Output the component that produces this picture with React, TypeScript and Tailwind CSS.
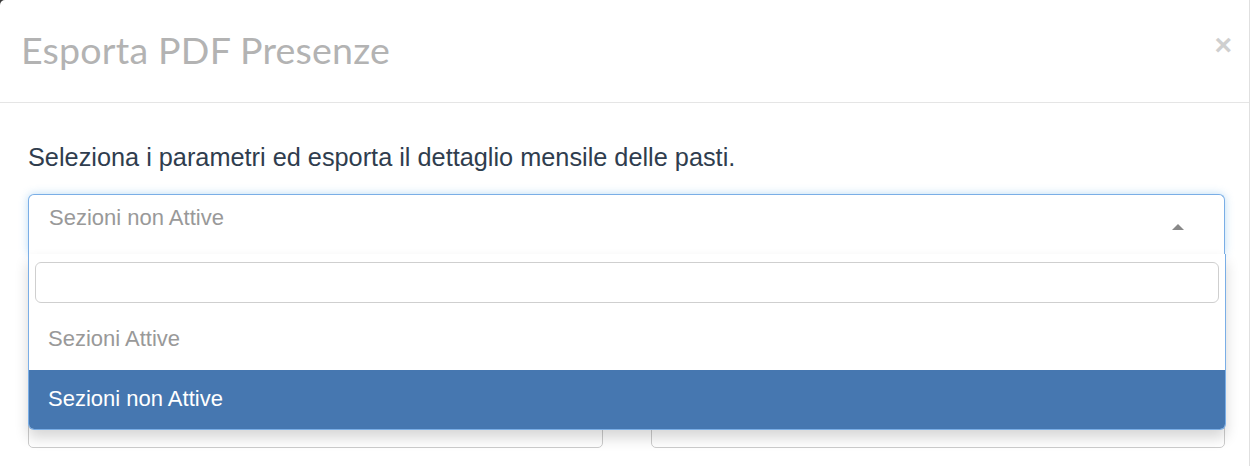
import React from "react";

const sans = "font-['Liberation_Sans',Arial,sans-serif]";

export default function App() {
  return (
    <div className="min-h-[466px] w-[1250px] bg-[#3a3a3a] overflow-hidden">
      <div className="bg-white rounded-tl-[5px] min-h-[466px] w-[1250px] border-r border-[#e0e0e0]">
        {/* header */}
        <div className="h-[103px] border-b border-[#e5e5e5] flex items-start justify-between pl-[21px] pr-[17px]">
          <h4 className="font-['Lato',sans-serif] text-[37.6px] leading-none text-[#b3b3b3] mt-[31px] tracking-[0.2px]">
            Esporta PDF Presenze
          </h4>
          <button className={`${sans} font-bold text-[30px] leading-none text-[#cfcfcf] mt-[30px]`}>×</button>
        </div>

        {/* body */}
        <div className={`${sans} px-[28px] pt-[40px]`}>
          <p className="text-[25.3px] leading-[28px] text-[#2f3d4e]">
            Seleziona i parametri ed esporta il dettaglio mensile delle pasti.
          </p>

          <div className="relative mt-[23px] w-[1197px]">
            {/* select */}
            <div className="h-[60px] border border-[#7aaee6] border-b-0 rounded-t-[6px] shadow-[0_0_8px_rgba(102,175,233,0.45)] flex items-center justify-between pl-[20px] pr-[40px] bg-white">
              <span className="text-[22px] text-[#999] -mt-[14px]">Sezioni non Attive</span>
              <span className="w-0 h-0 border-l-[6px] border-r-[6px] border-b-[6px] border-l-transparent border-r-transparent border-b-[#888] mt-[4px]" />
            </div>

            {/* behind fields */}
            <div className="pt-[58px]">
              <div className="h-[42px] border border-[#ccc] rounded-[4px]" />
              <div className="grid grid-cols-2 gap-[48px] mt-[48px]">
                <div className="h-[46px] border border-[#ccc] rounded-[5px]" />
                <div className="h-[46px] border border-[#ccc] rounded-[5px]" />
              </div>
            </div>

            {/* dropdown */}
            <div className="absolute top-[60px] left-0 -right-[1px] bg-white border border-t-0 border-[#7aaee6] rounded-b-[6px] shadow-[0_8px_14px_rgba(0,0,0,0.16)] overflow-hidden z-10">
              <div className="px-[6px] pt-[8px] pb-[7px]">
                <div className="h-[41px] border border-[#cfcfcf] rounded-[6px] bg-white" />
              </div>
              <div className="h-[60px] flex items-center pl-[19px] pb-[3px] text-[22px] text-[#999]">Sezioni Attive</div>
              <div className="h-[59px] flex items-center pl-[19px] pb-[3px] text-[22px] text-white bg-[#4677b0]">Sezioni non Attive</div>
            </div>
          </div>
        </div>
      </div>
    </div>
  );
}
